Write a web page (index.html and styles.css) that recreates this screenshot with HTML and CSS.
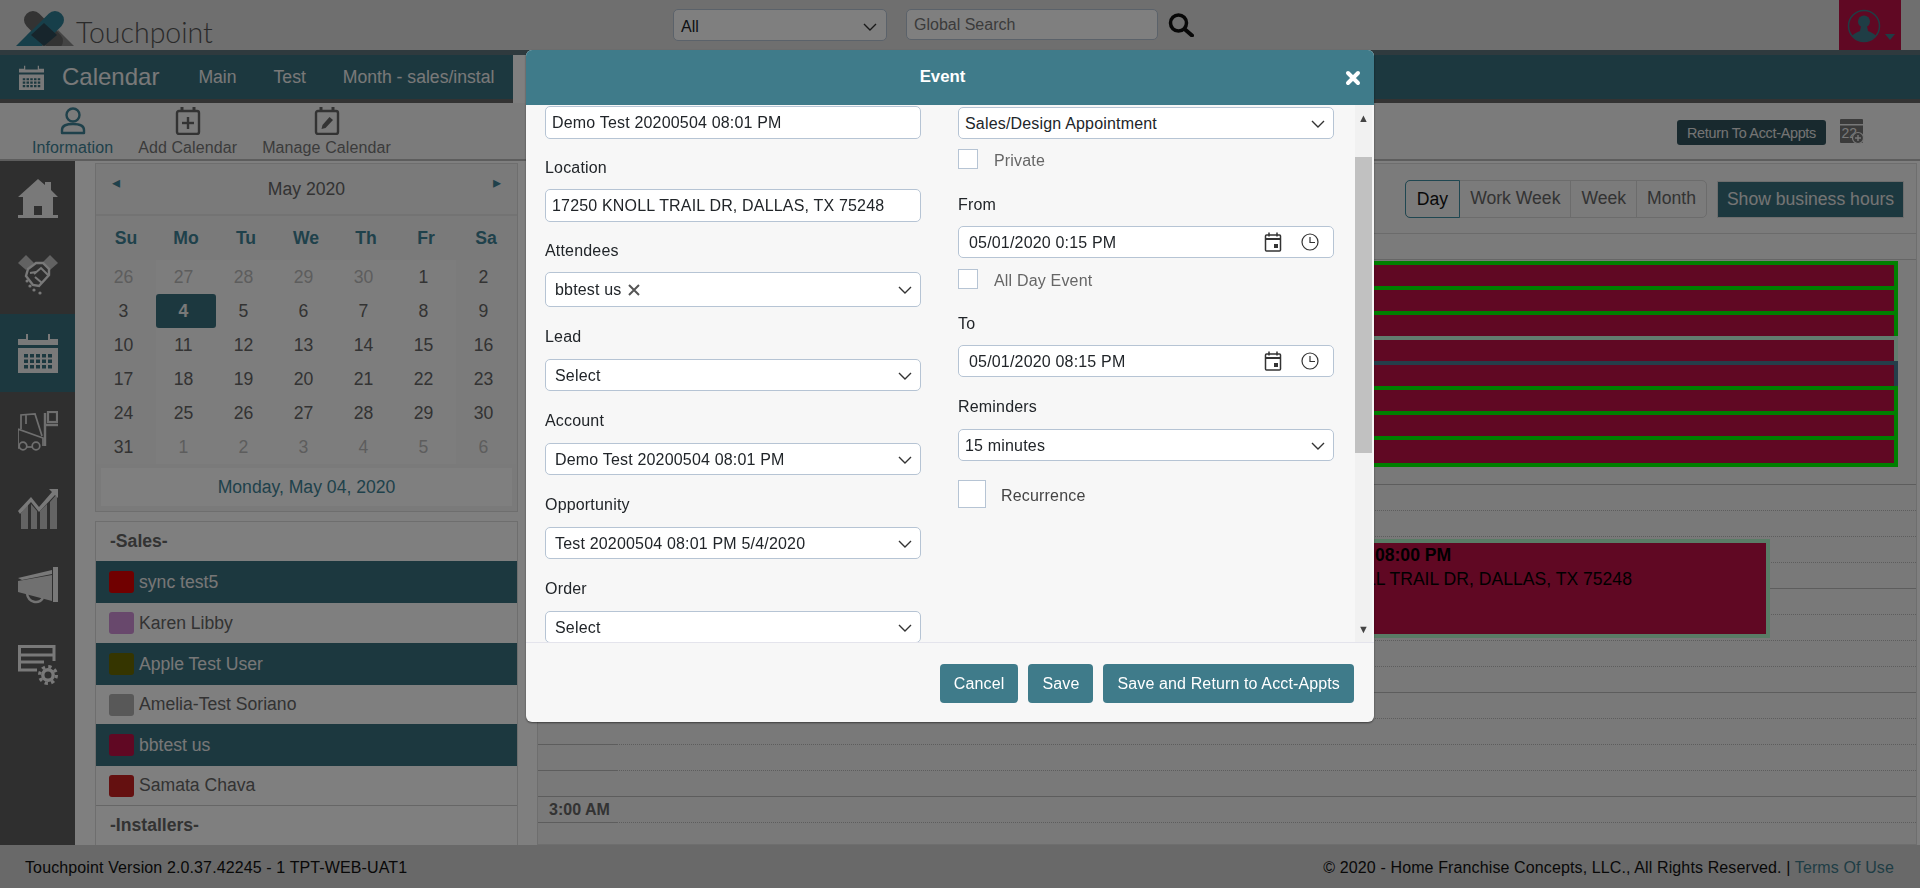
FILE: index.html
```html
<!DOCTYPE html>
<html lang="en">
<head>
    <meta charset="UTF-8" />
    <meta name="viewport" content="width=device-width, initial-scale=1" />
    <title>Touchpoint - Calendar</title>
    <link rel="stylesheet" href="styles.css">
</head>
<body>

<header class="topbar">
    <div class="brand">
        <svg class="brand-mark" viewBox="0 0 58 36" width="58" height="36">
            <polygon points="0,35 16,19 34,35" fill="#2f7f94"/>
            <polygon points="24,35 42,19 58,35" fill="#888"/>
            <line x1="17" y1="9" x2="38" y2="30" stroke="#666" stroke-width="18" stroke-linecap="round"/>
            <line x1="39" y1="9" x2="18" y2="30" stroke="#2f7f94" stroke-width="18" stroke-linecap="round"/>
            <polygon points="28,12 41,24 28,35 15,24" fill="#2f4a58"/>
            <rect x="0" y="35" width="58" height="10" fill="#dedede"/>
        </svg>
        <span class="brand-name">Touchpoint</span>
    </div>
    <div class="global-search">
        <div class="top-select">
            <span>All</span>
            <svg class="chev" viewBox="0 0 14 8" width="14" height="8"><polyline points="1,1 7,7 13,1"/></svg>
        </div>
        <div class="top-input">Global Search</div>
        <svg class="search-icon" viewBox="0 0 26 24" width="26" height="24">
            <circle cx="10.5" cy="10" r="8" fill="none" stroke="#111" stroke-width="3.5"/>
            <line x1="16.5" y1="16" x2="24" y2="22.5" stroke="#111" stroke-width="4" stroke-linecap="round"/>
        </svg>
    </div>
    <div class="user-box">
        <svg viewBox="0 0 50 34" width="50" height="34">
            <circle cx="17" cy="17" r="15.5" fill="none" stroke="#3f7b8a" stroke-width="1.5"/>
            <circle cx="17" cy="12.5" r="6" fill="#3f7b8a"/>
            <path d="M14 17 L20 17 L21 22 C25 24 28 25 29 27 C22 34 12 34 5 27 C6 25 9 24 13 22 Z" fill="#3f7b8a"/>
            <polygon points="38,25 48,25 43,31" fill="#3f7b8a"/>
        </svg>
    </div>
</header>

<nav class="navbar">
    <svg class="nav-cal" viewBox="0 0 40 40" width="25" height="25">
        <use href="#icon-calendar"/>
    </svg>
    <span class="nav-title">Calendar</span>
    <a class="nav-link">Main</a>
    <a class="nav-link">Test</a>
    <a class="nav-link">Month - sales/instal</a>
    <span class="nav-active"></span>
</nav>

<div class="toolbar">
    <div class="tool tool-info">
        <svg viewBox="0 0 26 28" width="26" height="28" fill="none" stroke="#3f8396" stroke-width="2.4">
            <circle cx="13" cy="8" r="6.5"/>
            <path d="M2 26 L2 23 C2 18 7 17 13 17 C19 17 24 18 24 23 L24 26 Z" stroke-linejoin="round"/>
        </svg>
        <span>Information</span>
    </div>
    <div class="tool">
        <svg viewBox="0 0 26 28" width="26" height="28" fill="none" stroke="#666" stroke-width="2.4">
            <rect x="2" y="4" width="22" height="23" rx="2"/>
            <line x1="7" y1="0" x2="7" y2="5" stroke-width="3"/>
            <line x1="19" y1="0" x2="19" y2="5" stroke-width="3"/>
            <line x1="13" y1="10" x2="13" y2="22"/>
            <line x1="7" y1="16" x2="19" y2="16"/>
        </svg>
        <span>Add Calendar</span>
    </div>
    <div class="tool">
        <svg viewBox="0 0 26 28" width="26" height="28" fill="none" stroke="#666" stroke-width="2.4">
            <rect x="2" y="4" width="22" height="23" rx="2"/>
            <line x1="7" y1="0" x2="7" y2="5" stroke-width="3"/>
            <line x1="19" y1="0" x2="19" y2="5" stroke-width="3"/>
            <polygon points="15.5,10 19,13 11.5,21 7.5,22 8.5,18" fill="#666" stroke="none"/>
        </svg>
        <span>Manage Calendar</span>
    </div>
    <button class="return-btn">Return To Acct-Appts</button>
    <svg class="add-cal" viewBox="0 0 24 25" width="24" height="25">
        <rect x="0" y="0" width="23" height="24" rx="1" fill="#777"/>
        <rect x="0" y="5" width="23" height="1.5" fill="#f0f0f0"/>
        <text x="1.5" y="19" font-size="14" font-family="Liberation Sans, sans-serif" fill="#f0f0f0">22</text>
        <circle cx="18" cy="19" r="5.5" fill="#777" stroke="#f0f0f0" stroke-width="1.2"/>
        <path d="M18 16v6M15 19h6" stroke="#f0f0f0" stroke-width="1.4"/>
    </svg>
</div>

<div class="main">
    <aside class="rail">
        <div class="rail-item">
            <svg viewBox="0 0 40 39" width="40" height="39" fill="#f2f2f2">
                <path d="M20 0 L27 6 L27 3 L33 3 L33 11 L40 18 L35 18 L35 36 L40 36 L40 39 L0 39 L0 36 L5 36 L5 18 L0 18 Z M16 27 L16 36 L24 36 L24 27 Z" fill-rule="evenodd"/>
            </svg>
        </div>
        <div class="rail-item">
            <svg viewBox="0 0 40 40" width="40" height="40" fill="none" stroke="#f2f2f2" stroke-width="2">
                <polygon points="0,8 8,0 16,8 8,15" fill="#c4c4c4" stroke="none"/>
                <polygon points="40,8 32,0 24,8 32,15" fill="#c4c4c4" stroke="none"/>
                <path d="M10 14 L18 8 L25 8 L31 14 L31 20 L21 31 L15 30 L8 21 Z" stroke-width="2.4"/>
                <path d="M16 19 L23 13 L30 20 M18 17 L12 18 M17 22 L24 28"/>
                <circle cx="9" cy="26" r="1.5" fill="#f2f2f2" stroke="none"/>
                <circle cx="12" cy="31" r="1.6" fill="#f2f2f2" stroke="none"/>
                <circle cx="16" cy="35" r="1.6" fill="#f2f2f2" stroke="none"/>
                <circle cx="22" cy="38" r="1.6" fill="#f2f2f2" stroke="none"/>
            </svg>
        </div>
        <div class="rail-item is-active">
            <svg viewBox="0 0 40 40" width="40" height="40"><use href="#icon-calendar"/></svg>
        </div>
        <div class="rail-item">
            <svg viewBox="0 0 40 40" width="40" height="40" fill="none" stroke="#dedede" stroke-width="1.7">
                <path d="M3 18 L3 4 L17 3 L24 25 M8 4 L8 13 M0 18 L25 27 L25 35 M0 18 L0 37 L1.5 37"/>
                <path d="M9 36 L14 36"/>
                <circle cx="5" cy="35" r="3.8"/>
                <circle cx="18" cy="35" r="3.8"/>
                <path d="M27 2 L27 35" stroke-width="2.4"/>
                <path d="M27 14 L40 14" stroke-width="2.4"/>
                <rect x="30" y="1" width="9" height="10" stroke-width="2.2"/>
            </svg>
        </div>
        <div class="rail-item">
            <svg viewBox="0 0 40 40" width="40" height="40" fill="#c8c8c8">
                <path d="M3 40 L3 24 L10 15 L10 40 Z M13 40 L13 15 L19 22 L19 40 Z M22 40 L22 22 L29 15 L29 40 Z M32 40 L32 13 L39 5 L39 40 Z"/>
                <path d="M0 22 L2 25 L13 13 L21 23 L37 6 L40 9 L40 0 L31 0 L34 3 L21 18 L13 8 Z" fill="#f2f2f2"/>
            </svg>
        </div>
        <div class="rail-item">
            <svg viewBox="0 0 40 40" width="40" height="40">
                <polygon points="0,11 34,3 34,7 4,13" fill="#f2f2f2"/>
                <polygon points="0,14 34,8 34,34 0,25" fill="#e0e0e0"/>
                <rect x="35" y="0" width="5" height="35" fill="#f2f2f2"/>
                <path d="M9 27 A9 10 0 0 0 25 31" fill="none" stroke="#e8e8e8" stroke-width="2.4"/>
            </svg>
        </div>
        <div class="rail-item">
            <svg viewBox="0 0 40 40" width="40" height="40" fill="none" stroke="#f2f2f2">
                <path d="M19 25 L1.5 25 L1.5 1.5 L36 1.5 L36 16" stroke-width="3"/>
                <line x1="2" y1="10" x2="35" y2="10" stroke-width="3"/>
                <line x1="2" y1="17" x2="26" y2="17" stroke-width="3"/>
                <circle cx="30" cy="30" r="5.2" stroke-width="3.4"/>
                <circle cx="30" cy="30" r="8.4" stroke-width="3.2" stroke-dasharray="3.3 3.3"/>
            </svg>
        </div>
    </aside>

    <section class="side">
        <div class="cal-panel">
            <div class="cal-head">
                <span class="cal-arrow">&#9666;</span>
                <span class="cal-month">May 2020</span>
                <span class="cal-arrow">&#9656;</span>
            </div>
            <div class="cal-days">
                <span>Su</span><span>Mo</span><span>Tu</span><span>We</span><span>Th</span><span>Fr</span><span>Sa</span>
            </div>
            <div class="cal-grid">
                <span class="off">26</span><span class="off">27</span><span class="off">28</span><span class="off">29</span><span class="off">30</span><span>1</span><span>2</span>
                <span>3</span><span class="today">4</span><span>5</span><span>6</span><span>7</span><span>8</span><span>9</span>
                <span>10</span><span>11</span><span>12</span><span>13</span><span>14</span><span>15</span><span>16</span>
                <span>17</span><span>18</span><span>19</span><span>20</span><span>21</span><span>22</span><span>23</span>
                <span>24</span><span>25</span><span>26</span><span>27</span><span>28</span><span>29</span><span>30</span>
                <span>31</span><span class="off">1</span><span class="off">2</span><span class="off">3</span><span class="off">4</span><span class="off">5</span><span class="off">6</span>
            </div>
            <div class="cal-foot">Monday, May 04, 2020</div>
        </div>

        <div class="people">
            <div class="people-head">-Sales-</div>
            <div class="person is-on"><i class="swatch" style="background:#e00000"></i>sync test5</div>
            <div class="person"><i class="swatch" style="background:#d090d8"></i>Karen Libby</div>
            <div class="person is-on"><i class="swatch" style="background:#6a6a00"></i>Apple Test User</div>
            <div class="person person-short"><i class="swatch" style="background:#b0b0b0"></i>Amelia-Test Soriano</div>
            <div class="person is-on"><i class="swatch" style="background:#c01046"></i>bbtest us</div>
            <div class="person person-last"><i class="swatch" style="background:#c82020"></i>Samata Chava</div>
            <div class="people-head">-Installers-</div>
        </div>
    </section>

    <section class="schedule">
        <div class="sched-top">
            <div class="view-group">
                <span class="view is-current">Day</span>
                <span class="view">Work Week</span>
                <span class="view">Week</span>
                <span class="view">Month</span>
            </div>
            <button class="hours-btn">Show business hours</button>
        </div>
        <div class="sched-head"></div>
        <div class="sched-grid">
            <div class="sched-events">
                <div class="stack">
                    <div class="ev"></div>
                    <div class="ev"></div>
                    <div class="ev"></div>
                    <div class="ev ev-pale"></div>
                    <div class="ev ev-blue"></div>
                    <div class="ev"></div>
                    <div class="ev"></div>
                    <div class="ev ev-end"></div>
                </div>
                <div class="ev-large">
                    <b>00:15 PM - 08:00 PM</b>
                    <span>17250 KNOLL TRAIL DR, DALLAS, TX 75248</span>
                </div>
            </div>
            <div class="slot hour"><span class="slot-time"></span></div>
            <div class="slot"><span class="slot-time"></span></div>
            <div class="slot"><span class="slot-time"></span></div>
            <div class="slot"><span class="slot-time"></span></div>
            <div class="slot hour"><span class="slot-time"></span></div>
            <div class="slot"><span class="slot-time"></span></div>
            <div class="slot"><span class="slot-time"></span></div>
            <div class="slot"><span class="slot-time"></span></div>
            <div class="slot hour"><span class="slot-time"></span></div>
            <div class="slot"><span class="slot-time"></span></div>
            <div class="slot"><span class="slot-time"></span></div>
            <div class="slot"><span class="slot-time"></span></div>
            <div class="slot hour"><span class="slot-time">3:00 AM</span></div>
            <div class="slot"><span class="slot-time"></span></div>
        </div>
    </section>
</div>

<footer class="footer">
    <span>Touchpoint Version 2.0.37.42245 - 1 TPT-WEB-UAT1</span>
    <span>&copy; 2020 - Home Franchise Concepts, LLC., All Rights Reserved. | <a class="terms">Terms Of Use</a></span>
</footer>

<div class="backdrop"></div>

<div class="modal">
    <div class="modal-head">
        <span class="modal-title">Event</span>
        <svg class="modal-close" viewBox="0 0 16 16" width="16" height="16">
            <path d="M3 3 L13 13 M13 3 L3 13" stroke="#fff" stroke-width="4" stroke-linecap="round"/>
        </svg>
    </div>
    <div class="modal-body">
        <div class="form">
            <div class="form-col">
                <div class="ctrl ctrl-input gap-sel">Demo Test 20200504 08:01 PM</div>
                <label class="lbl">Location</label>
                <div class="ctrl ctrl-input gap-sel">17250 KNOLL TRAIL DR, DALLAS, TX 75248</div>
                <label class="lbl">Attendees</label>
                <div class="ctrl ctrl-sel ctrl-tall gap-big">
                    <span>bbtest us <svg class="tag-x" viewBox="0 0 12 12" width="12" height="12"><path d="M1 1 L11 11 M11 1 L1 11"/></svg></span>
                    <svg class="chev" viewBox="0 0 14 8" width="14" height="8"><polyline points="1,1 7,7 13,1"/></svg>
                </div>
                <label class="lbl">Lead</label>
                <div class="ctrl ctrl-sel gap-big">
                    <span>Select</span>
                    <svg class="chev" viewBox="0 0 14 8" width="14" height="8"><polyline points="1,1 7,7 13,1"/></svg>
                </div>
                <label class="lbl">Account</label>
                <div class="ctrl ctrl-sel gap-big">
                    <span>Demo Test 20200504 08:01 PM</span>
                    <svg class="chev" viewBox="0 0 14 8" width="14" height="8"><polyline points="1,1 7,7 13,1"/></svg>
                </div>
                <label class="lbl">Opportunity</label>
                <div class="ctrl ctrl-sel gap-big">
                    <span>Test 20200504 08:01 PM 5/4/2020</span>
                    <svg class="chev" viewBox="0 0 14 8" width="14" height="8"><polyline points="1,1 7,7 13,1"/></svg>
                </div>
                <label class="lbl">Order</label>
                <div class="ctrl ctrl-sel">
                    <span>Select</span>
                    <svg class="chev" viewBox="0 0 14 8" width="14" height="8"><polyline points="1,1 7,7 13,1"/></svg>
                </div>
            </div>
            <div class="form-col form-col-right">
                <div class="ctrl ctrl-sel ctrl-r">
                    <span>Sales/Design Appointment</span>
                    <svg class="chev" viewBox="0 0 14 8" width="14" height="8"><polyline points="1,1 7,7 13,1"/></svg>
                </div>
                <div class="check-row"><i class="check"></i><span>Private</span></div>
                <label class="lbl lbl-r lbl-from">From</label>
                <div class="ctrl ctrl-date">
                    <span>05/01/2020 0:15 PM</span>
                    <span class="date-icons">
                        <svg viewBox="0 0 18 20" width="18" height="20" fill="none" stroke="#333" stroke-width="1.5"><rect x="1.5" y="3" width="15" height="16" rx="1"/><line x1="1.5" y1="7" x2="16.5" y2="7" stroke-width="2"/><path d="M5 0.5v4M13 0.5v4"/><rect x="10" y="12" width="4" height="4" fill="#333" stroke="none"/></svg>
                        <svg viewBox="0 0 18 18" width="18" height="18" fill="none" stroke="#333" stroke-width="1.2"><circle cx="9" cy="9" r="8"/><path d="M9 4v5.5h5"/></svg>
                    </span>
                </div>
                <div class="check-row check-row-day"><i class="check"></i><span>All Day Event</span></div>
                <label class="lbl lbl-r lbl-to">To</label>
                <div class="ctrl ctrl-date">
                    <span>05/01/2020 08:15 PM</span>
                    <span class="date-icons">
                        <svg viewBox="0 0 18 20" width="18" height="20" fill="none" stroke="#333" stroke-width="1.5"><rect x="1.5" y="3" width="15" height="16" rx="1"/><line x1="1.5" y1="7" x2="16.5" y2="7" stroke-width="2"/><path d="M5 0.5v4M13 0.5v4"/><rect x="10" y="12" width="4" height="4" fill="#333" stroke="none"/></svg>
                        <svg viewBox="0 0 18 18" width="18" height="18" fill="none" stroke="#333" stroke-width="1.2"><circle cx="9" cy="9" r="8"/><path d="M9 4v5.5h5"/></svg>
                    </span>
                </div>
                <label class="lbl lbl-r lbl-rem">Reminders</label>
                <div class="ctrl ctrl-sel ctrl-r">
                    <span>15 minutes</span>
                    <svg class="chev" viewBox="0 0 14 8" width="14" height="8"><polyline points="1,1 7,7 13,1"/></svg>
                </div>
                <div class="check-row check-row-rec"><i class="check check-big"></i><span>Recurrence</span></div>
            </div>
        </div>
        <div class="scrollbar">
            <span class="sb-arrow">&#9650;</span>
            <span class="sb-thumb"></span>
            <span class="sb-arrow sb-down">&#9660;</span>
        </div>
    </div>
    <div class="modal-foot">
        <button class="btn">Cancel</button>
        <button class="btn">Save</button>
        <button class="btn">Save and Return to Acct-Appts</button>
    </div>
</div>

<svg class="defs" width="0" height="0">
    <symbol id="icon-calendar" viewBox="0 0 40 40">
        <path d="M0 6 L8 6 L8 1 L10 1 L10 7 L30 7 L30 1 L32 1 L32 6 L40 6 L40 12 L0 12 Z" fill="#f2f2f2"/>
        <path d="M0 15 L40 15 L40 40 L0 40 Z M6 21 v3.5 h4 v-3.5 z M12 21 v3.5 h4 v-3.5 z M18 21 v3.5 h4 v-3.5 z M24 21 v3.5 h4 v-3.5 z M30 21 v3.5 h4 v-3.5 z M6 26.5 v3.5 h4 v-3.5 z M12 26.5 v3.5 h4 v-3.5 z M18 26.5 v3.5 h4 v-3.5 z M24 26.5 v3.5 h4 v-3.5 z M30 26.5 v3.5 h4 v-3.5 z M6 32 v3.5 h4 v-3.5 z M12 32 v3.5 h4 v-3.5 z M18 32 v3.5 h4 v-3.5 z M24 32 v3.5 h4 v-3.5 z M30 32 v3.5 h4 v-3.5 z" fill="#f2f2f2" fill-rule="evenodd"/>
    </symbol>
</svg>

</body>
</html>
```

FILE: styles.css
```css
* {
    box-sizing: border-box;
}
html, body {
    height: 100%;
}
body {
    margin: 0;
    height: 100vh;
    overflow: hidden;
    display: flex;
    flex-direction: column;
    font-family: "Liberation Sans", Arial, sans-serif;
    font-size: 16px;
    color: #212529;
    background-color: #fff;
}
button {
    font-family: inherit;
    border: 0;
    cursor: pointer;
}
.defs {
    position: absolute;
}

/* Top bar */
.topbar {
    height: 50px;
    flex: none;
    display: flex;
    align-items: flex-start;
    background-color: #dedede;
    position: relative;
}
.brand {
    display: flex;
    align-items: center;
    width: 673px;
    padding: 8px 0 0 16px;
}
.brand-name {
    font-family: Lato, sans-serif;
    font-weight: 300;
    font-size: 28.5px;
    line-height: 36px;
    color: #555;
    margin: 6px 0 0 2px;
}
.global-search {
    display: flex;
    align-items: flex-start;
    padding-top: 9px;
}
.top-select {
    width: 214px;
    height: 32px;
    display: flex;
    align-items: center;
    justify-content: space-between;
    padding: 3px 9px 0 7px;
    background-color: #fff;
    border: 1px solid #b6c4d4;
    border-radius: 5px;
}
.top-input {
    width: 252px;
    height: 31px;
    margin-left: 19px;
    padding: 6px 7px 0;
    background-color: #fff;
    border: 1px solid #b6c4d4;
    border-radius: 5px;
    color: #777;
}
.search-icon {
    margin: 4px 0 0 10px;
}
.user-box {
    position: absolute;
    right: 19px;
    top: 0;
    width: 62px;
    height: 50px;
    padding: 9px 0 0 8px;
    background-color: #c01046;
}
.chev {
    fill: none;
    stroke: #333;
    stroke-width: 1.4;
    flex: none;
}

/* Teal nav */
.navbar {
    height: 53px;
    flex: none;
    display: flex;
    align-items: center;
    padding: 0 0 0 19px;
    background-color: #39707e;
    border-top: 5px solid #5f757c;
    border-bottom: 4px solid #666;
    color: #f2f2f2;
    position: relative;
}
.nav-title {
    font-size: 24px;
    margin: 0 39px 0 18px;
}
.nav-link {
    font-size: 17.6px;
    margin-right: 37px;
}
.nav-active {
    position: absolute;
    left: 513px;
    top: 0;
    bottom: -4px;
    width: 30px;
    background-color: #fff;
}

/* Toolbar under the nav */
.toolbar {
    height: 58px;
    flex: none;
    display: flex;
    align-items: flex-start;
    padding: 4px 0 0 32px;
    background-color: #f6f6f6;
    border-bottom: 2px solid #bbb;
}
.tool {
    display: flex;
    flex-direction: column;
    align-items: center;
    margin-right: 25px;
    color: #777;
    line-height: 24px;
    letter-spacing: 0.1px;
}
.tool-info {
    color: #3f8396;
}
.tool svg {
    display: block;
}
.tool span {
    margin-top: 1px;
}
.return-btn {
    margin: 13px 0 0 auto;
    width: 149px;
    height: 25px;
    padding: 0;
    font-size: 14.4px;
    letter-spacing: -0.3px;
    color: #e8e8e8;
    background-color: #30525c;
    border-radius: 3px;
}
.add-cal {
    margin: 12px 56px 0 14px;
}

/* Main area */
.main {
    flex: 1;
    min-height: 0;
    display: flex;
    overflow: hidden;
}
.rail {
    width: 75px;
    flex: none;
    background-color: #5f5f5f;
}
.rail-item {
    height: 78px;
    display: flex;
    align-items: center;
    padding-left: 18px;
}
.rail-item:first-child {
    height: 75px;
}
.rail-item.is-active {
    background-color: #39707e;
}
.side {
    width: 443px;
    flex: none;
    padding: 2px 0 0 20px;
}
.cal-panel {
    height: 349px;
    background-color: #f4f4f4;
    border: 1px solid #ddd;
}
.cal-head {
    height: 52px;
    display: flex;
    align-items: center;
    justify-content: space-between;
    padding: 0 16px;
    border-bottom: 2px solid #e6e6e6;
}
.cal-month {
    font-size: 17.6px;
    color: #666;
    padding-top: 1px;
}
.cal-arrow {
    color: #3f8396;
    font-size: 16px;
    margin-top: -13px;
}
.cal-days,
.cal-grid {
    display: grid;
    grid-template-columns: repeat(7, 60px);
    text-align: center;
    font-size: 17.6px;
}
.cal-days {
    height: 44px;
    align-items: center;
    font-weight: bold;
    color: #3f8396;
}
.cal-grid {
    grid-auto-rows: 34px;
    color: #666;
}
.cal-grid span {
    line-height: 34px;
    padding-right: 5px;
    background-color: #fbfbfb;
}
.cal-grid span:nth-child(7n),
.cal-grid span:nth-child(7n+1) {
    background-color: #f6f6f6;
}
.cal-grid .off {
    color: #bbb;
}
.cal-grid .today {
    background-color: #39707e;
    color: #f2f2f2;
    font-weight: bold;
    border-radius: 3px;
}
.cal-foot {
    height: 38px;
    margin: 4px 5px 0;
    text-align: center;
    line-height: 38px;
    font-size: 17.6px;
    color: #3f8396;
    background-color: #ffffff;
}
.people {
    margin-top: 9px;
    border: 1px solid #ddd;
    border-bottom: 0;
    font-size: 17.6px;
    color: #666;
}
.people-head {
    height: 39px;
    padding: 0 14px;
    line-height: 38px;
    font-weight: bold;
}
.person {
    height: 40px;
    display: flex;
    align-items: center;
    padding-left: 13px;
}
.person-short {
    height: 39px;
}
.person-last {
    border-bottom: 1px solid #ccc;
}
.person.is-on {
    height: 42px;
    background-color: #39707e;
    color: #efefef;
}
.swatch {
    width: 25px;
    height: 22px;
    margin-right: 5px;
    border-radius: 3px;
}

/* Day view */
.schedule {
    flex: 1;
    min-width: 0;
    margin: 2px 3px 0 19px;
    border: 1px solid #dcdcdc;
    border-top-color: #ddd;
    background-color: #f6f6f6;
    display: flex;
    flex-direction: column;
}
.sched-top {
    height: 70px;
    display: flex;
    justify-content: flex-end;
    align-items: flex-start;
    padding: 16px 12px 0 0;
    border-bottom: 1px solid #d6d6d6;
}
.view-group {
    display: flex;
    height: 38px;
    border: 1px solid #d8d8d8;
    border-radius: 5px;
    color: #666;
    font-size: 17.6px;
}
.view {
    padding: 0 10px;
    line-height: 35px;
    border-right: 1px solid #d8d8d8;
}
.view:last-child {
    border-right: 0;
}
.view.is-current {
    margin: -1px 0 -1px -1px;
    padding: 0 11px;
    line-height: 37px;
    color: #111;
    border: 1px solid #3f8ea2;
    border-radius: 5px 0 0 5px;
}
.hours-btn {
    width: 187px;
    height: 37px;
    margin: 1px 0 0 10px;
    padding: 0;
    font-size: 17.6px;
    color: #e8e8e8;
    background-color: #39707e;
    border: 1px solid #ddd;
}
.sched-head {
    height: 26px;
    flex: none;
    border-bottom: 1px solid #ccc;
}
.sched-grid {
    flex: 1;
    min-height: 0;
    padding-top: 224px;
    position: relative;
    overflow: hidden;
    background-color: #f2f2f2;
}
.slot {
    height: 26px;
    border-top: 1px dotted #bbb;
}
.slot.hour {
    border-top: 1px solid #bbb;
}
.slot-time {
    display: block;
    width: 79px;
    height: 26px;
    margin-top: -1px;
    padding: 1px 0 0 11px;
    border-top: 1px solid #bbb;
    font-weight: bold;
    color: #666;
    line-height: 24px;
}
.sched-events {
    position: absolute;
    inset: 0;
}
.stack {
    position: absolute;
    top: 1px;
    left: 700px;
    right: 18px;
}
.ev {
    height: 25px;
    background-color: #c01046;
    border-top: 4px solid #00ff00;
    border-right: 4px solid #00ff00;
}
.ev-pale {
    border-color: #c4f8dc;
}
.ev-blue {
    border-color: #4a7c94;
}
.ev-end {
    height: 31px;
    border-bottom: 4px solid #00ff00;
}
.ev-large {
    position: absolute;
    top: 279px;
    left: 728px;
    width: 504px;
    height: 99px;
    padding: 0 4px;
    display: flex;
    flex-direction: column;
    background-color: #c01046;
    border: 4px solid #b4f8cc;
    color: #000;
    font-size: 17.6px;
    line-height: 24px;
    white-space: nowrap;
}
.ev-large b {
    margin-left: 9px;
}

.footer {
    height: 43px;
    flex: none;
    display: flex;
    justify-content: space-between;
    align-items: center;
    padding: 2px 26px 0 25px;
    background-color: #d2d2d2;
    color: #111;
    letter-spacing: 0.12px;
}
.terms {
    color: #3f7b8a;
}

/* Modal over a dimmed page */
.backdrop {
    position: fixed;
    inset: 0;
    background-color: rgba(0, 0, 0, 0.5);
}
.modal {
    position: fixed;
    left: 526px;
    top: 50px;
    width: 848px;
    height: 672px;
    display: flex;
    flex-direction: column;
    background-color: #f7f7f7;
    border-radius: 6px;
    box-shadow: 0 1px 2px rgba(0, 0, 0, 0.5);
    overflow: hidden;
}
.modal-head {
    height: 55px;
    flex: none;
    display: flex;
    justify-content: center;
    align-items: center;
    padding-right: 15px;
    background-color: #3f7b8a;
    color: #fff;
    position: relative;
}
.modal-title {
    font-size: 16.8px;
    font-weight: bold;
    margin-bottom: 1px;
}
.modal-close {
    position: absolute;
    right: 13px;
    top: 20px;
}
.modal-body {
    flex: 1;
    min-height: 0;
    display: flex;
    overflow: hidden;
}
.form {
    flex: 1;
    display: grid;
    grid-template-columns: 376px 376px;
    column-gap: 37px;
    padding: 1px 0 0 19px;
    align-content: start;
    letter-spacing: 0.18px;
}
.form-col-right {
    padding-top: 1px;
}
.lbl {
    display: block;
    height: 24px;
    margin-bottom: 9px;
    line-height: 24px;
}
.gap-big + .lbl {
    margin-bottom: 10px;
}
.ctrl {
    height: 32px;
    display: flex;
    align-items: center;
    justify-content: space-between;
    padding: 0 9px;
    background-color: #fff;
    border: 1px solid #b6c4d4;
    border-radius: 5px;
    white-space: nowrap;
}
.ctrl-input {
    height: 33px;
    padding: 0 6px;
}
.ctrl-sel {
    padding: 1px 8px 0 9px;
}
.ctrl-tall {
    height: 35px;
}
.ctrl-r {
    padding-right: 8px;
    padding-left: 6px;
}
.gap-sel {
    margin-bottom: 17px;
}
.gap-big {
    margin-bottom: 18px;
}
.tag-x {
    fill: none;
    stroke: #555;
    stroke-width: 2;
    margin-left: 2px;
    vertical-align: -1px;
}
.ctrl-date {
    padding: 0 14px 0 10px;
}
.ctrl-date > span:first-child {
    padding-top: 2px;
}
.date-icons {
    display: flex;
    align-items: center;
    gap: 19px;
}
.check-row {
    display: flex;
    align-items: center;
    height: 20px;
    margin-top: 10px;
    color: #666;
}
.check-row span {
    padding-top: 3px;
}
.check {
    width: 20px;
    height: 20px;
    margin-right: 16px;
    background-color: #fff;
    border: 1px solid #b6c4d4;
}
.check-row-day {
    margin-top: 11px;
}
.check-row-rec {
    height: 28px;
    margin-top: 19px;
    color: #444;
}
.check-big {
    width: 28px;
    height: 28px;
    margin-right: 15px;
}
.lbl-from {
    margin-top: 24px;
    margin-bottom: 9px;
}
.lbl-to {
    margin-top: 23px;
    margin-bottom: 9px;
}
.lbl-rem {
    margin-top: 18px;
    margin-bottom: 10px;
}
.scrollbar {
    width: 17px;
    flex: none;
    margin-right: 2px;
    display: flex;
    flex-direction: column;
    background-color: #f1f1f1;
    color: #444;
    font-size: 11px;
    text-align: center;
}
.sb-arrow {
    height: 26px;
    line-height: 26px;
}
.sb-thumb {
    height: 296px;
    margin-top: 26px;
    background-color: #c1c1c1;
}
.sb-down {
    margin-top: auto;
}
.modal-foot {
    height: 80px;
    flex: none;
    display: flex;
    justify-content: flex-end;
    align-items: flex-start;
    gap: 10px;
    padding: 21px 20px 0 0;
    border-top: 1px solid #e4e4ec;
}
.btn {
    height: 39px;
    padding: 0 14px;
    font-size: 16px;
    letter-spacing: 0.13px;
    color: #fff;
    background-color: #3f7b8a;
    border-radius: 4px;
}
```
